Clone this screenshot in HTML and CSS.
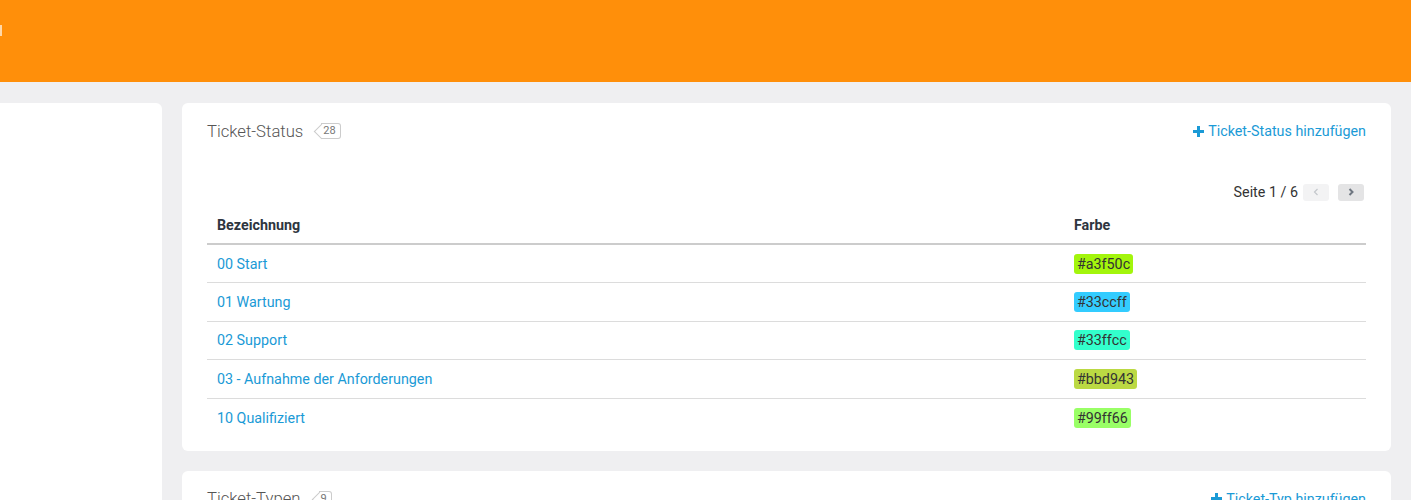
FILE: index.html
```html
<!DOCTYPE html>
<html lang="de">
<head>
  <meta charset="UTF-8">
  <title>Ticket-Status</title>
  <meta name="viewport" content="width=device-width, initial-scale=1">
  <link rel="stylesheet" href="styles.css">
</head>
<body>

  <header class="topbar">
    <span class="logo-edge"></span>
  </header>

  <div class="layout">
    <aside class="sidebar"></aside>

    <main class="content">
      <section class="card">
        <div class="card-head">
          <h2>Ticket-Status <span class="count">28</span></h2>
          <a href="#" class="add-link">
            <svg width="11" height="11" viewBox="0 0 11 11"><rect x="4" y="0" width="3" height="11" fill="currentColor"/><rect x="0" y="4" width="11" height="3" fill="currentColor"/></svg>
            Ticket-Status hinzufügen
          </a>
        </div>

        <div class="pager">
          <span>Seite 1 / 6</span>
          <button class="pager-btn disabled">
            <svg width="8" height="8" viewBox="0 0 8 8"><polyline points="5.5,1 2.5,4 5.5,7" fill="none" stroke="currentColor" stroke-width="1.2"/></svg>
          </button>
          <button class="pager-btn">
            <svg width="8" height="8" viewBox="0 0 8 8"><polyline points="2.5,1 5.5,4 2.5,7" fill="none" stroke="currentColor" stroke-width="2"/></svg>
          </button>
        </div>

        <table class="list">
          <thead>
            <tr>
              <th class="col-name">Bezeichnung</th>
              <th>Farbe</th>
            </tr>
          </thead>
          <tbody>
            <tr>
              <td><a href="#">00 Start</a></td>
              <td><span class="swatch" style="background:#a3f50c">#a3f50c</span></td>
            </tr>
            <tr>
              <td><a href="#">01 Wartung</a></td>
              <td><span class="swatch" style="background:#33ccff">#33ccff</span></td>
            </tr>
            <tr>
              <td><a href="#">02 Support</a></td>
              <td><span class="swatch" style="background:#33ffcc">#33ffcc</span></td>
            </tr>
            <tr>
              <td><a href="#">03 - Aufnahme der Anforderungen</a></td>
              <td><span class="swatch" style="background:#bbd943">#bbd943</span></td>
            </tr>
            <tr>
              <td><a href="#">10 Qualifiziert</a></td>
              <td><span class="swatch" style="background:#99ff66">#99ff66</span></td>
            </tr>
          </tbody>
        </table>
      </section>

      <section class="card">
        <div class="card-head">
          <h2>Ticket-Typen <span class="count">9</span></h2>
          <a href="#" class="add-link">
            <svg width="11" height="11" viewBox="0 0 11 11"><rect x="4" y="0" width="3" height="11" fill="currentColor"/><rect x="0" y="4" width="11" height="3" fill="currentColor"/></svg>
            Ticket-Typ hinzufügen
          </a>
        </div>
      </section>
    </main>
  </div>

</body>
</html>
```

FILE: styles.css
```css
* {
  margin: 0;
  padding: 0;
  box-sizing: border-box;
}

body {
  font-family: Roboto, 'Liberation Sans', sans-serif;
  font-size: 14.3px;
  color: #333;
  background-color: #efeff1;
}

a {
  color: #1a9ad6;
  text-decoration: none;
}

.topbar {
  height: 82px;
  background-color: #ff8f0a;
  padding-top: 25px;
}

.logo-edge {
  display: block;
  width: 2px;
  height: 11px;
  background-color: rgba(255, 255, 255, 0.65);
}

.layout {
  display: flex;
  gap: 20px;
  padding: 21px 20px 0 0;
}

.sidebar {
  width: 162px;
  min-height: 600px;
  background-color: #fff;
  border-radius: 0 6px 0 0;
  flex-shrink: 0;
}

.content {
  flex: 1;
  display: flex;
  flex-direction: column;
  gap: 20px;
}

.card {
  background-color: #fff;
  border-radius: 6px;
  padding: 15px 25px 14px;
}

.card-head {
  display: flex;
  justify-content: space-between;
  align-items: center;
  height: 26px;
}

h2 {
  font-size: 16.7px;
  font-weight: 300;
  color: #555;
  display: flex;
  align-items: center;
}

.count {
  position: relative;
  display: inline-block;
  margin-left: 18px;
  height: 16px;
  line-height: 14px;
  padding: 0 4px 0 2px;
  font-size: 11px;
  font-weight: 400;
  color: #777;
  border: 1px solid #ccc;
  border-left: 0;
  border-radius: 0 3px 3px 0;
}

.count::before {
  content: '';
  position: absolute;
  left: -5px;
  top: 2px;
  width: 10px;
  height: 10px;
  border-left: 1px solid #ccc;
  border-bottom: 1px solid #ccc;
  transform: rotate(45deg);
}

.add-link {
  display: flex;
  align-items: center;
  gap: 4px;
  font-size: 14.3px;
}

.pager {
  display: flex;
  justify-content: flex-end;
  align-items: center;
  height: 20px;
  margin-top: 38px;
  padding-right: 2px;
}

.pager span {
  margin-right: 5px;
}

.pager-btn {
  width: 26px;
  height: 17px;
  border: none;
  border-radius: 3px;
  background-color: #e4e4e5;
  color: #6e7680;
  display: flex;
  align-items: center;
  justify-content: center;
  margin-left: 9px;
  cursor: pointer;
}

.pager-btn:first-of-type {
  margin-left: 0;
}

.pager-btn.disabled {
  background-color: #f3f3f4;
  color: #c4c8cc;
}

.list {
  width: 100%;
  border-collapse: collapse;
  margin-top: 4px;
}

.list th {
  text-align: left;
  font-weight: 700;
  color: #2e3540;
  height: 38px;
  padding: 0 10px;
  border-bottom: 2px solid #ccc;
}

.list .col-name {
  width: 857px;
}

.list td {
  height: 38.5px;
  padding: 0 10px;
  border-bottom: 1px solid #dcdcdc;
}

.list tr:first-child td {
  padding-top: 1px;
}

.list tr:last-child td {
  border-bottom: none;
}

.swatch {
  display: inline-block;
  padding: 0 3px;
  line-height: 20px;
  border-radius: 3px;
  color: #333;
}
```
